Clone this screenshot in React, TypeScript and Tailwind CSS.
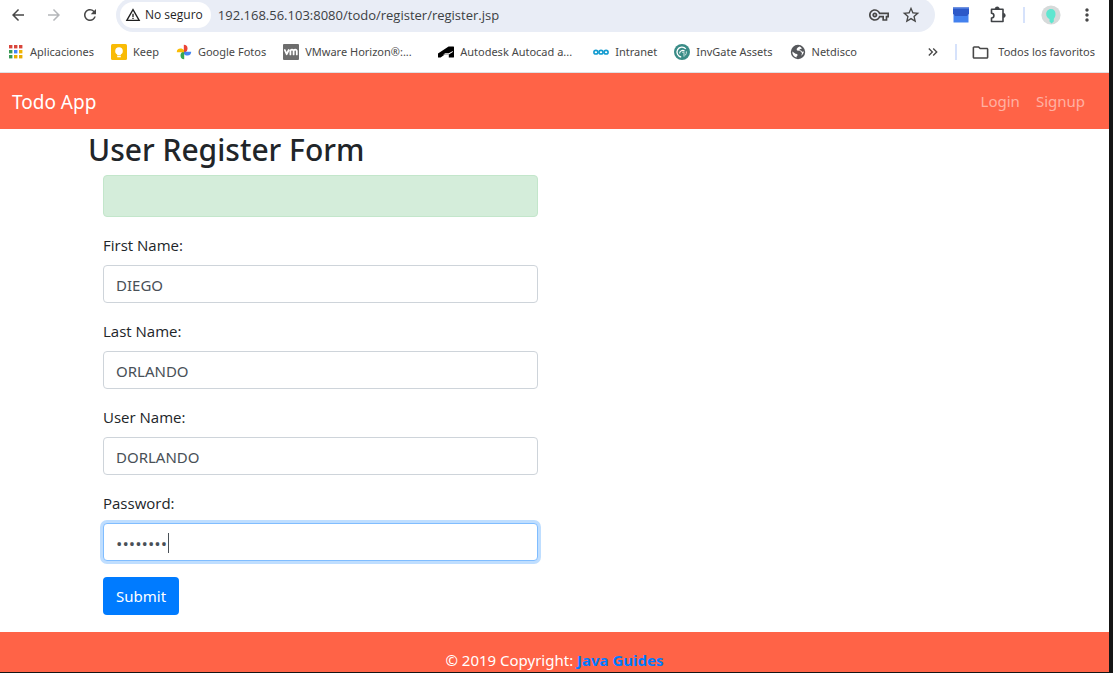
import React from "react";
import {
  MdArrowBack,
  MdArrowForward,
  MdRefresh,
  MdWarningAmber,
  MdOutlineVpnKey,
  MdStarBorder,
  MdMoreVert,
  MdOutlineFolder,
  MdKeyboardDoubleArrowRight,
} from "react-icons/md";

function AppsIcon() {
  const colors = ["#d9453b", "#d9453b", "#d9453b", "#3a9a55", "#4285f4", "#f0b400", "#3a9a55", "#e8ab00", "#e8ab00"];
  return (
    <svg width="16" height="16" viewBox="0 0 16 16" aria-hidden="true">
      {colors.map((c, i) => (
        <rect key={i} x={1 + (i % 3) * 5} y={1 + Math.floor(i / 3) * 5} width="3.4" height="3.4" fill={c} />
      ))}
    </svg>
  );
}

function KeepIcon() {
  return (
    <svg width="16" height="16" viewBox="0 0 16 16" aria-hidden="true">
      <rect width="16" height="16" rx="1.5" fill="#f9bb05" />
      <circle cx="8" cy="7" r="3.8" fill="#fff" />
      <rect x="6.2" y="10" width="3.6" height="1.4" fill="#fff" />
      <rect x="6.2" y="12" width="3.6" height="1.3" fill="#fff" />
    </svg>
  );
}

function PhotosIcon() {
  return (
    <svg width="16" height="16" viewBox="0 0 16 16" aria-hidden="true">
      <path d="M7.8 8V.8a3.7 3.7 0 0 1 3.7 3.7c0 1.5-.6 2.6-1.6 3.5z" fill="#ea4335" />
      <path d="M8 7.8h7.2a3.7 3.7 0 0 1-3.7 3.7c-1.5 0-2.6-.6-3.5-1.6z" fill="#4285f4" />
      <path d="M8.2 8v7.2a3.7 3.7 0 0 1-3.7-3.7c0-1.5.6-2.6 1.600-3.500z" fill="#34a853" />
      <path d="M8 8.200H.8a3.700 3.700 0 0 1 3.700-3.700c1.500 0 2.600.6 3.500 1.600z" fill="#fbbc04" />
    </svg>
  );
}

function VmIcon() {
  return (
    <svg width="16" height="16" viewBox="0 0 16 16" aria-hidden="true">
      <rect width="16" height="16" rx="1" fill="#6d6d6d" />
      <path
        d="M1.800 6l1.900 4.200L5.700 6M7.400 10.400V7.300a1.600 1.600 0 0 1 3.200 0v3.100M10.600 7.300a1.600 1.600 0 0 1 3.200 0v3.100"
        fill="none"
        stroke="#fff"
        strokeWidth="1.8"
        strokeLinecap="round"
        strokeLinejoin="round"
      />
    </svg>
  );
}

function AutodeskIcon() {
  return (
    <svg width="16" height="16" viewBox="0 0 16 16" aria-hidden="true">
      <path d="M0 13.200V9.600L10.600 2.600H15.600a.4.4 0 0 1 .4.4V13a.4.4 0 0 1-.4.4H10.800V10.600h-4L2.600 13.400H0z" fill="#000" />
      <path d="M7.400 9.200h3.400l4-2.200v1l-4 2.600H5z" fill="#fff" />
    </svg>
  );
}

function IntranetIcon() {
  return (
    <svg width="16" height="16" viewBox="0 0 16 16" aria-hidden="true">
      <g fill="none" stroke="#129bd0" strokeWidth="1.6">
        <ellipse cx="2.9" cy="8.2" rx="2" ry="1.8" />
        <ellipse cx="8" cy="8.2" rx="2" ry="1.8" />
        <ellipse cx="13.1" cy="8.2" rx="2" ry="1.8" />
      </g>
    </svg>
  );
}

function InvGateIcon() {
  return (
    <svg width="16" height="16" viewBox="0 0 16 16" aria-hidden="true">
      <circle cx="8" cy="8" r="8" fill="#3a8c87" />
      <path d="M11.800 4.800A5 5 0 1 0 7.200 13" fill="none" stroke="#fff" strokeWidth="1.3" />
      <path d="M10.600 7.200A3 3 0 0 0 5.600 9.400" fill="none" stroke="#fff" strokeWidth="1.1" />
      <path d="M8 8.200h2v4.400M12.400 7.400a5 5 0 0 1-1.200 4" fill="none" stroke="#cfe6e3" strokeWidth="1" />
    </svg>
  );
}

function GlobeIcon() {
  return (
    <svg width="16" height="16" viewBox="0 0 16 16" aria-hidden="true">
      <circle cx="8" cy="8" r="7.2" fill="#56585c" />
      <path
        d="M2.300 7.600l3.200 2.200 1.600.2.600 1.200-1 1-.2 1.400C4 13 2.200 10.800 2.300 7.600zM9.600 2.400L7.800 3.400l-1.200 1.600.4 1.400 2.400.4 1.800 1 .8 1.800-.8 2.200C13 10.400 13.800 9 13.800 7.600l-1.600.2-1.200-1.200-1.600-.4.400-1 2.200-.6C11.200 3.400 10.400 2.700 9.600 2.400z"
        fill="#fff"
      />
    </svg>
  );
}

function PuzzleIcon() {
  return (
    <svg width="18" height="18" viewBox="0 0 18 18" aria-hidden="true">
      <path
        d="M2.500 3.200H14V15.500H2.500V12a2.400 2.400 0 0 0 0-4.800z"
        fill="none"
        stroke="#3f4246"
        strokeWidth="1.6"
        strokeLinejoin="round"
      />
      <path d="M6 3a2.200 2.200 0 0 1 4.400 0zM14.200 7.200a2.200 2.200 0 0 1 0 4.400z" fill="#3f4246" stroke="#3f4246" strokeWidth=".5" />
    </svg>
  );
}

function BlueBoxIcon() {
  return (
    <svg width="16" height="16" viewBox="0 0 16 16" aria-hidden="true">
      <path d="M.5 5h15v10.500H.5z" fill="#4381ee" />
      <path d="M0 .5h16v6l-2 2.500H2L0 6.500z" fill="#2d59c8" />
      <path d="M0 .5h16v1.500H0z" fill="#4a78dc" />
    </svg>
  );
}

function AvatarIcon() {
  return (
    <svg width="20" height="20" viewBox="0 0 20 20" aria-hidden="true">
      <circle cx="10" cy="10" r="9.6" fill="#d6dada" />
      <path d="M10 4c3 0 4.500 2 4.500 5s-1.300 4-1.700 5v2.500l-2.300 2-2-2V14C6.500 13 5.200 11.500 5.200 9S7 4 10 4z" fill="#5fe6d0" />
    </svg>
  );
}

const bookmarks = [
  { label: "Aplicaciones", icon: <AppsIcon /> },
  { label: "Keep", icon: <KeepIcon /> },
  { label: "Google Fotos", icon: <PhotosIcon /> },
  { label: "VMware Horizon®:...", icon: <VmIcon />, wide: true },
  { label: "Autodesk Autocad a...", icon: <AutodeskIcon />, wide: true },
  { label: "Intranet", icon: <IntranetIcon /> },
  { label: "InvGate Assets", icon: <InvGateIcon /> },
  { label: "Netdisco", icon: <GlobeIcon /> },
];

function BrowserBar() {
  return (
    <header className="border-b border-[#dfe1e5] bg-white text-[#474747]">
      <div className="flex h-8 items-center pr-3 pb-0.5">
        <div className="flex w-29 shrink-0 items-center gap-[18px] pl-[9px] text-[18px]">
          <button type="button" aria-label="Atrás"><MdArrowBack /></button>
          <button type="button" aria-label="Adelante" className="text-[#b4b6b9]"><MdArrowForward /></button>
          <button type="button" aria-label="Recargar"><MdRefresh /></button>
        </div>
        <div className="flex h-8.5 min-w-0 flex-1 items-center rounded-full bg-[#e9edf6] pr-[14px] pl-1">
          <button type="button" className="flex h-6.5 items-center gap-1 rounded-full bg-white pr-2 pl-[5px] text-[12px] text-[#1f1f1f]">
            <MdWarningAmber className="text-[16px]" />
            No seguro
          </button>
          <input
            aria-label="Dirección"
            defaultValue="192.168.56.103:8080/todo/register/register.jsp"
            className="ml-[7px] min-w-0 flex-1 bg-transparent pt-0.5 text-[13px] text-[#3c4043] outline-none"
          />
          <div className="flex items-center gap-3 text-[20px]">
            <button type="button" aria-label="Contraseñas"><MdOutlineVpnKey /></button>
            <button type="button" aria-label="Favorito"><MdStarBorder /></button>
          </div>
        </div>
        <div className="flex shrink-0 items-center pl-[18px]">
          <button type="button" aria-label="Extensión"><BlueBoxIcon /></button>
          <button type="button" aria-label="Extensiones" className="ml-5"><PuzzleIcon /></button>
          <span className="ml-4 h-4 w-0.5 bg-[#d6e2fb]" />
          <button type="button" aria-label="Perfil" className="ml-4"><AvatarIcon /></button>
          <button type="button" aria-label="Menú" className="ml-4 text-[20px]"><MdMoreVert /></button>
        </div>
      </div>
      <nav aria-label="Marcadores" className="flex h-10 items-center gap-[17px] pr-3.5 pl-2 font-['Noto_Sans',sans-serif] text-[11px] whitespace-nowrap">
        {bookmarks.map((b) => (
          <a key={b.label} href="#" className="flex items-center gap-1.5">
            {b.icon}
            <span className={b.wide ? "w-29" : ""}>{b.label}</span>
          </a>
        ))}
        <div className="ml-auto flex items-center">
          <button type="button" aria-label="Más marcadores" className="text-[16px]"><MdKeyboardDoubleArrowRight /></button>
          <span className="ml-3.5 h-4 w-0.5 bg-[#d6e2fb]" />
          <a href="#" className="ml-3.5 flex items-center gap-2">
            <MdOutlineFolder className="text-[19px]" />
            Todos los favoritos
          </a>
        </div>
      </nav>
    </header>
  );
}

const inputClass = "block h-9.5 w-full rounded border bg-white px-3 pt-0.5 text-[#495057] outline-none";

function Field({ id, label, value }: { id: string; label: string; value: string }) {
  return (
    <div className="mb-4">
      <label htmlFor={id} className="mb-2 block leading-6">{label}</label>
      <input
        id={id}
        type="text"
        defaultValue={value}
        className={`${inputClass} border-[#ced4da] font-['Noto_Sans',sans-serif] text-[15px]`}
      />
    </div>
  );
}

export default function App() {
  return (
    <div className="flex min-h-screen flex-col border-r-4 border-b border-[#151515] bg-white font-['Open_Sans','Noto_Sans',sans-serif] text-[15px] text-[#212529]">
      <BrowserBar />
      <nav aria-label="Principal" className="flex h-14 items-center justify-between bg-[#ff6347] pr-6 pl-3 font-['Noto_Sans',sans-serif]">
        <a href="#" className="pt-0.5 text-[19px] text-white">Todo App</a>
        <div className="flex gap-4 text-white/50">
          <a href="#">Login</a>
          <a href="#">Signup</a>
        </div>
      </nav>
      <main className="pr-[3px]">
        <div className="mx-auto max-w-[960px] px-[15px]">
          <h2 className="mb-1.5 pt-0.5 font-['Noto_Sans',sans-serif] text-[30px] leading-[38px] font-medium">User Register Form</h2>
          <form className="w-1/2 px-[15px] pb-[17px]" onSubmit={(e) => e.preventDefault()}>
            <div role="alert" className="mb-4 h-10.5 rounded border border-[#c3e6cb] bg-[#d4edda]" />
            <Field id="firstName" label="First Name:" value="DIEGO" />
            <Field id="lastName" label="Last Name:" value="ORLANDO" />
            <Field id="username" label="User Name:" value="DORLANDO" />
            <div className="mb-4">
              <label htmlFor="password" className="mb-2 block leading-6">Password:</label>
              <div className="relative">
                <input
                  id="password"
                  type="password"
                  defaultValue="dorlando"
                  className={`${inputClass} border-[#80bdff] text-[17px] ring-3 ring-[#bfdeff]`}
                />
                <span className="pointer-events-none absolute top-2.5 left-[65px] h-5 w-px bg-[#495057]" />
              </div>
            </div>
            <button type="submit" className="h-9.5 rounded bg-[#007bff] px-[13px] font-['Noto_Sans',sans-serif] text-white">Submit</button>
          </form>
        </div>
      </main>
      <footer className="flex-1 bg-[#ff6347] pt-4 text-center font-['Noto_Sans',sans-serif] leading-6 text-white">
        © 2019 Copyright: <a href="#" className="font-bold text-[#007bff]">Java Guides</a>
      </footer>
    </div>
  );
}
